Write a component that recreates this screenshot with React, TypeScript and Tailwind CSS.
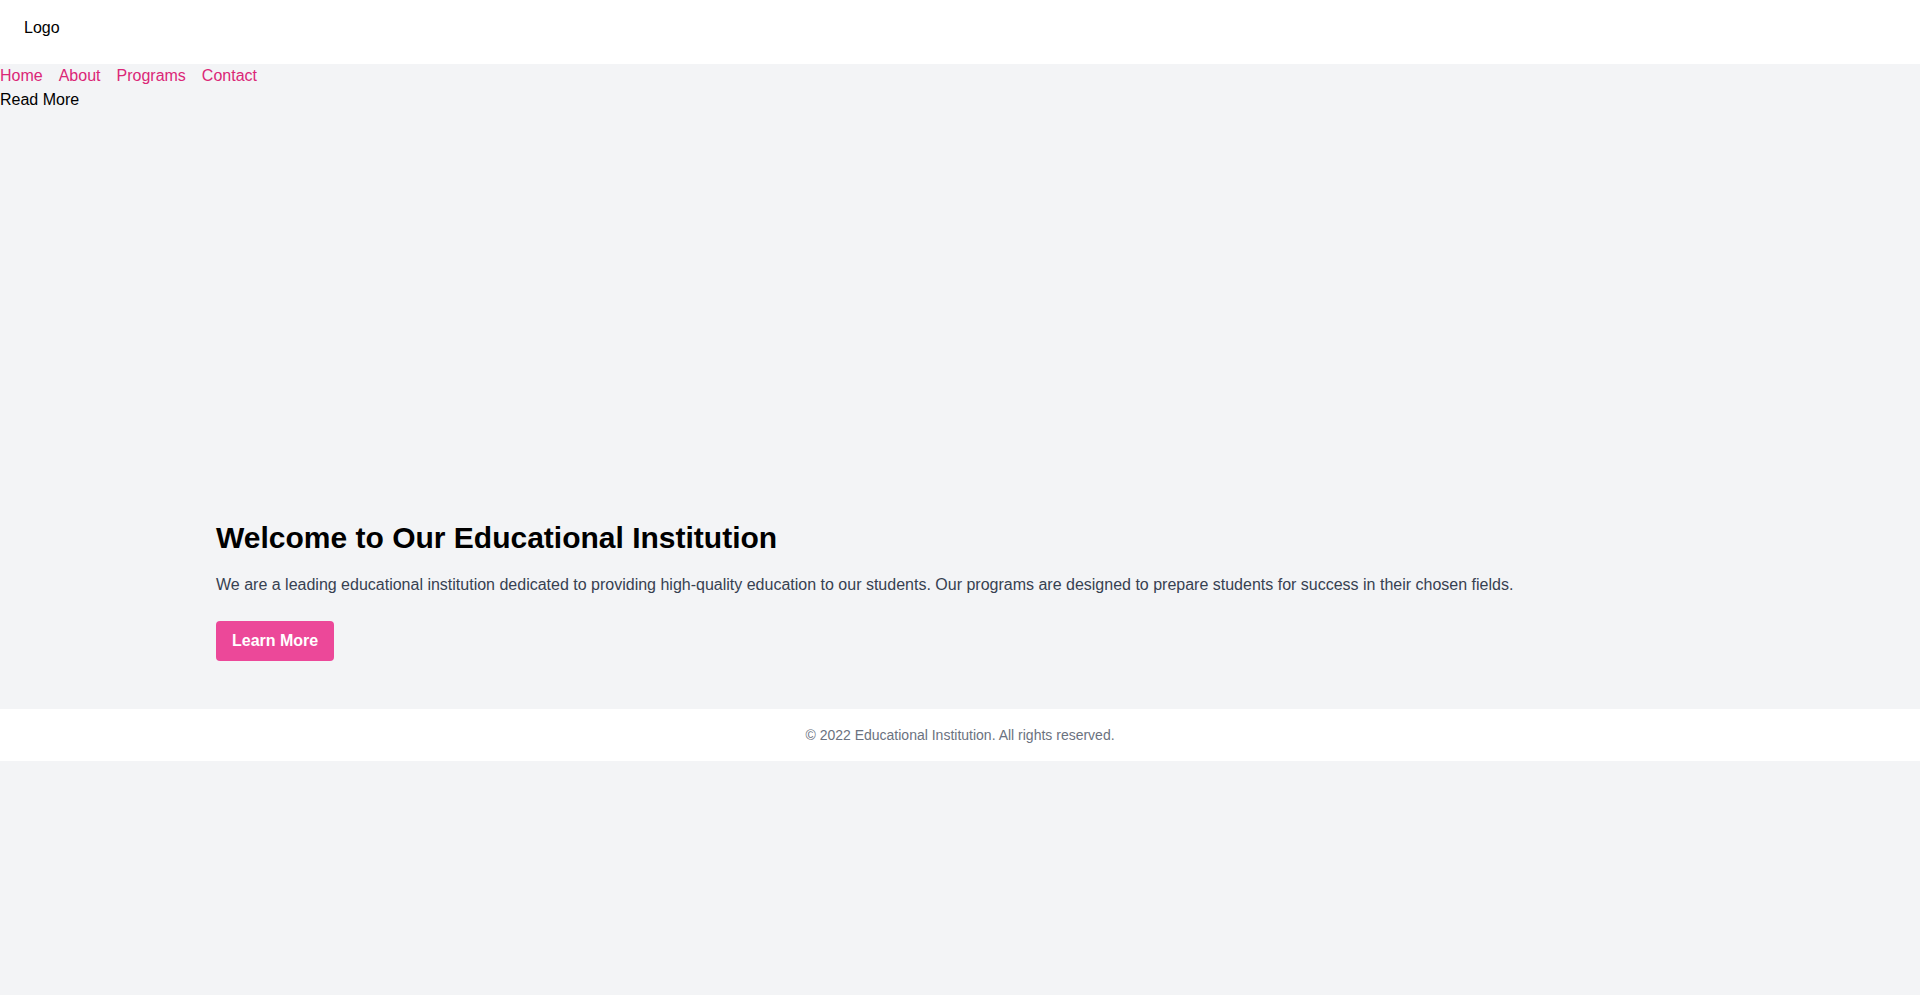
export default function App() {
  return (
    <div className="min-h-[995px] bg-[#f3f4f6] text-black" style={{ fontFamily: '"Liberation Sans", Arial, Helvetica, sans-serif' }}>
      <header className="h-16 bg-white px-6 py-4">
        <div className="text-base leading-6">Logo</div>
      </header>
      <nav className="flex gap-4 text-base leading-6">
        <a href="#" className="text-[#db2777]">Home</a>
        <a href="#" className="text-[#db2777]">About</a>
        <a href="#" className="text-[#db2777]">Programs</a>
        <a href="#" className="text-[#db2777]">Contact</a>
      </nav>
      <div className="text-base leading-6">Read More</div>
      <div className="h-[360px]" />
      <section className="py-12">
        <div className="container mx-auto px-6">
          <h1 className="mb-[17px] text-3xl leading-9 font-bold">Welcome to Our Educational Institution</h1>
          <p className="mb-6 text-base leading-6 text-[#374151]">
            We are a leading educational institution dedicated to providing high-quality education to our students. Our programs are designed to prepare students for success in their chosen fields.
          </p>
          <button className="rounded bg-[#ec4899] px-4 py-2 text-base leading-6 font-bold text-white">Learn More</button>
        </div>
      </section>
      <footer className="bg-white py-4 text-center text-sm leading-5 text-[#6b7280]">
        © 2022 Educational Institution. All rights reserved.
      </footer>
    </div>
  );
}
